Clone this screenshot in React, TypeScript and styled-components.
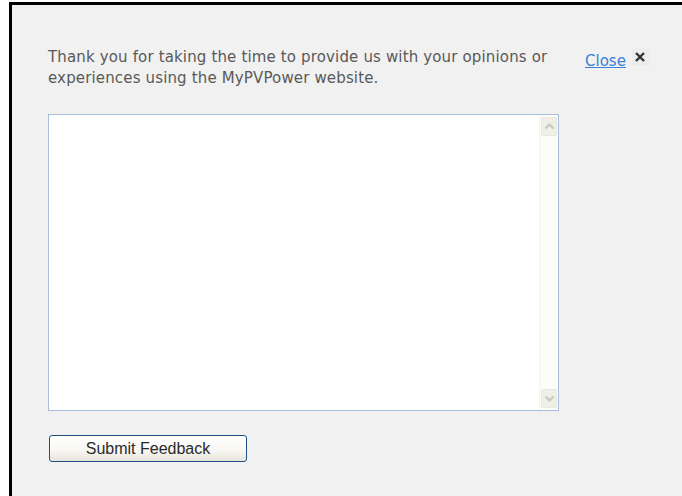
import React from 'react';
import styled, {createGlobalStyle} from 'styled-components';

const GlobalStyle = createGlobalStyle`
  html, body {
    margin: 0;
    padding: 0;
    background: #ffffff;
  }
  #root {
    height: 496px;
    overflow: hidden;
  }
`;

const Panel = styled.div`
  box-sizing: border-box;
  margin: 2px 0 0 9px;
  height: 494px;
  border-top: 3px solid #000;
  border-left: 3px solid #000;
  background: #f1f1f1;
  padding: 42px 0 0 36px;
  font-family: 'DejaVu Sans', Verdana, sans-serif;
`;

const Header = styled.div`
  display: flex;
  align-items: flex-start;
`;

const Intro = styled.p`
  margin: 0;
  width: 510px;
  font-size: 15px;
  line-height: 21px;
  letter-spacing: 0.15px;
  color: #595959;
`;

const CloseLink = styled.a`
  margin: 4px 0 0 27px;
  font-size: 15px;
  line-height: 21px;
  color: #3a80d6;
  text-decoration: underline;
  cursor: pointer;
`;

const CloseIcon = styled.span`
  display: flex;
  align-items: center;
  justify-content: center;
  width: 17px;
  height: 17px;
  margin: 1px 0 0 6px;
  background: #ececec;
`;

const Field = styled.div`
  display: flex;
  box-sizing: border-box;
  width: 511px;
  height: 297px;
  margin-top: 25px;
  border: 1px solid #a7bfda;
  background: #fff;
`;

const Input = styled.textarea`
  flex: 1;
  border: none;
  outline: none;
  resize: none;
  padding: 2px 4px;
  font-family: 'DejaVu Sans', Verdana, sans-serif;
  font-size: 13px;
  background: transparent;
`;

const ScrollTrack = styled.div`
  display: flex;
  flex-direction: column;
  justify-content: space-between;
  width: 19px;
  padding: 2px 1px 2px 1px;
  box-sizing: border-box;
  background: #fdfdf8;
  border-left: 1px solid #f4f3ec;
`;

const ScrollButton = styled.div`
  display: flex;
  align-items: center;
  justify-content: center;
  height: 17px;
  border-radius: 2px;
  background: #efeee7;
  border: 1px solid #e9e8e0;
`;

const SubmitButton = styled.button`
  display: block;
  box-sizing: border-box;
  width: 198px;
  height: 27px;
  margin: 24px 0 0 1px;
  border: 1px solid #1f4f82;
  border-radius: 3px;
  background: linear-gradient(#ffffff 0%, #f7f6f2 60%, #e6e4da 100%);
  font-family: 'Liberation Sans', Arial, sans-serif;
  font-size: 16px;
  color: #2a2a2a;
  padding: 0;
  cursor: pointer;
`;

const Chevron: React.FC<{up?: boolean}> = ({up}) => (
  <svg width="11" height="7" viewBox="0 0 11 7">
    <path
      d={up ? 'M1.5 5.5 L5.5 1.5 L9.5 5.5' : 'M1.5 1.5 L5.5 5.5 L9.5 1.5'}
      fill="none"
      stroke="#c9c8c0"
      strokeWidth="2"
    />
  </svg>
);

export default function App() {
  return (
    <>
      <GlobalStyle />
      <Panel>
        <Header>
          <Intro>
            Thank you for taking the time to provide us with your opinions or
            experiences using the MyPVPower website.
          </Intro>
          <CloseLink>Close</CloseLink>
          <CloseIcon>
            <svg width="10" height="10" viewBox="0 0 10 10">
              <path d="M1 1 L9 9 M9 1 L1 9" stroke="#333" strokeWidth="2.4" />
            </svg>
          </CloseIcon>
        </Header>
        <Field>
          <Input />
          <ScrollTrack>
            <ScrollButton>
              <Chevron up />
            </ScrollButton>
            <ScrollButton>
              <Chevron />
            </ScrollButton>
          </ScrollTrack>
        </Field>
        <SubmitButton>Submit Feedback</SubmitButton>
      </Panel>
    </>
  );
}
